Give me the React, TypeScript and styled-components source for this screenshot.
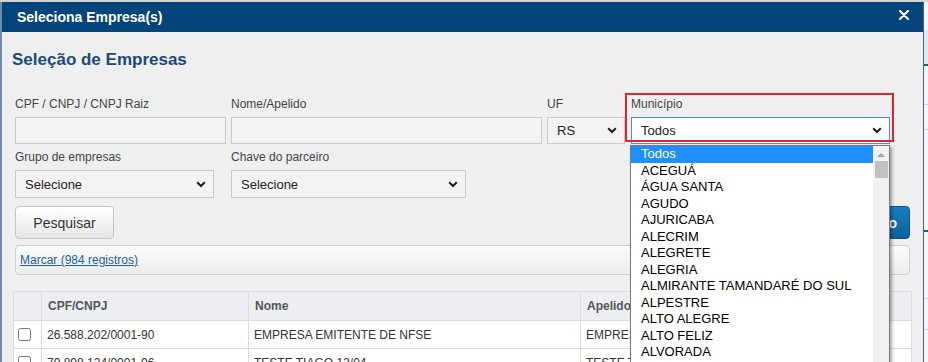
import React from "react";
import styled, { createGlobalStyle, css } from "styled-components";

const Global = createGlobalStyle`
  html, body { margin: 0; padding: 0; overflow: hidden; }
  body {
    background: #f3f4f6;
    font-family: "Liberation Sans", Arial, sans-serif;
    color: #333;
  }
  * { box-sizing: border-box; }
`;

const Page = styled.div`
  display: flex;
  align-items: flex-start;
  border-top: 2px solid #d2d2d2;
  height: 362px;
`;

const Modal = styled.div`
  width: 924px;
  height: 360px;
  display: flex;
  flex-direction: column;
  border-left: 2px solid #6b8cb0;
  border-right: 1px solid #4a6078;
  background: #efefef;
  flex-shrink: 0;
`;

const Header = styled.div`
  height: 30px;
  background: #03457a;
  display: flex;
  align-items: center;
  justify-content: space-between;
  padding: 0 14px 0 15px;
  flex-shrink: 0;
`;

const Title = styled.div`
  color: #fff;
  font-weight: bold;
  font-size: 14px;
`;

const Close = styled.button`
  border: 0;
  background: none;
  padding: 0;
  width: 10px;
  height: 10px;
  display: flex;
  margin-bottom: 4px;
  cursor: pointer;
`;

const Body = styled.div`
  padding: 18px 13px 0 13px;
  flex: 1;
  overflow: hidden;
`;

const Heading = styled.h2`
  margin: 0 0 0 -3px;
  font-size: 17px;
  line-height: 20px;
  font-weight: bold;
  color: #1a4a7a;
`;

const FieldRow = styled.div<{ $top: number }>`
  display: flex;
  gap: 5px;
  margin-top: ${(p) => p.$top}px;
`;

const Field = styled.div<{ $w: number; $ml?: number }>`
  width: ${(p) => p.$w}px;
  margin-left: ${(p) => p.$ml ?? 0}px;
  position: relative;
  display: flex;
  flex-direction: column;
`;

const Label = styled.label`
  font-size: 12px;
  line-height: 14px;
  height: 14px;
  color: #444;
  margin-bottom: 6px;
  white-space: nowrap;
`;

const controlBase = css`
  height: 27px;
  border: 1px solid #c9c9c9;
  background: #f3f3f3;
  font-family: "Liberation Sans", Arial, sans-serif;
  font-size: 13px;
  color: #222;
`;

const TextInput = styled.input`
  ${controlBase};
  width: 100%;
  padding: 0 8px;
  outline: none;
`;

const SelectBox = styled.div<{ $w?: number; $h?: number; $focused?: boolean }>`
  ${controlBase};
  width: ${(p) => (p.$w ? `${p.$w}px` : "100%")};
  height: ${(p) => p.$h ?? 27}px;
  display: flex;
  align-items: center;
  justify-content: space-between;
  padding: 0 7px 0 9px;
  ${(p) =>
    p.$focused &&
    css`
      background: #fff;
      border-color: #4a8fd6;
    `}
`;

const Chevron = () => (
  <svg width="10" height="7" viewBox="0 0 10 7" aria-hidden>
    <path d="M1.2 1.3 L5 5 L8.8 1.3" fill="none" stroke="#1c1c1c" strokeWidth="2" />
  </svg>
);

const Highlight = styled.div`
  position: absolute;
  left: -6px;
  top: -4px;
  right: -4px;
  bottom: 2px;
  border: 2px solid #e2242d;
  pointer-events: none;
`;

const Dropdown = styled.div`
  position: absolute;
  top: calc(100% + 1px);
  left: -1px;
  width: 260px;
  height: 240px;
  background: #fff;
  border: 1px solid #7a7a7a;
  box-shadow: 2px 2px 3px rgba(0, 0, 0, 0.35);
  display: flex;
  z-index: 5;
  overflow: hidden;
`;

const OptionList = styled.div`
  flex: 1;
  display: flex;
  flex-direction: column;
`;

const Option = styled.div<{ $active?: boolean }>`
  height: 16.5px;
  line-height: 16.5px;
  font-size: 13px;
  padding-left: 10px;
  color: ${(p) => (p.$active ? "#fff" : "#000")};
  background: ${(p) => (p.$active ? "#1e90ff" : "transparent")};
  white-space: nowrap;
  flex-shrink: 0;
`;

const Scrollbar = styled.div`
  width: 16px;
  background: #f1f1f1;
  display: flex;
  flex-direction: column;
  align-items: center;
  padding-top: 7px;
  gap: 4px;
`;

const Thumb = styled.div`
  width: 13px;
  height: 17px;
  background: #c1c1c1;
`;

const ActionRow = styled.div`
  display: flex;
  justify-content: space-between;
  margin-top: 8px;
`;

const Button = styled.button<{ $primary?: boolean }>`
  height: 33px;
  padding: 0 17px;
  border-radius: 4px;
  font-family: "Liberation Sans", Arial, sans-serif;
  font-size: 14px;
  ${(p) =>
    p.$primary
      ? css`
          background: linear-gradient(#1a7dc2, #0b619f);
          border: 1px solid #08558a;
          color: #fff;
          font-weight: bold;
          padding: 0 12px;
        `
      : css`
          background: linear-gradient(#ffffff, #e6e6e6);
          border: 1px solid #c3c3c3;
          color: #333;
          width: 99px;
        `}
`;

const MarkBar = styled.div`
  margin-top: 6px;
  height: 30px;
  border: 1px solid #cdcdcd;
  border-radius: 4px;
  background: linear-gradient(#fbfbfb, #ececec);
  display: flex;
  align-items: center;
  padding-left: 4px;
`;

const MarkLink = styled.a`
  color: #1d5f9c;
  text-decoration: underline;
  font-size: 12px;
`;

const Table = styled.table`
  margin: 16px -2px 0;
  width: calc(100% + 4px);
  border-collapse: collapse;
  font-size: 12px;
  background: #fff;
`;

const Th = styled.th<{ $w?: number }>`
  height: 29px;
  background: #eceef1;
  color: #555;
  font-weight: bold;
  text-align: left;
  padding: 0 6px;
  border: 1px solid #dcdcdc;
  ${(p) => p.$w && `width: ${p.$w}px;`}
`;

const Td = styled.td`
  height: 28px;
  padding: 0 5px;
  color: #333;
  border: 1px solid #dcdcdc;
  white-space: nowrap;
`;

const CheckCell = styled.td`
  height: 28px;
  padding: 0 0 0 4px;
  border: 1px solid #dcdcdc;
`;

const Check = styled.input`
  margin: 0;
  width: 13px;
  height: 13px;
  display: block;
`;

const Backdrop = styled.div`
  flex: 1;
  height: 360px;
  display: flex;
  flex-direction: column;
  background: #f4f5f7;
`;

const Seg = styled.div<{ $h: number; $c: string }>`
  height: ${(p) => p.$h}px;
  background: ${(p) => p.$c};
  flex-shrink: 0;
`;

const municipios = [
  "Todos",
  "ACEGUÁ",
  "ÁGUA SANTA",
  "AGUDO",
  "AJURICABA",
  "ALECRIM",
  "ALEGRETE",
  "ALEGRIA",
  "ALMIRANTE TAMANDARÉ DO SUL",
  "ALPESTRE",
  "ALTO ALEGRE",
  "ALTO FELIZ",
  "ALVORADA",
  "AMARAL FERRADOR",
  "AMETISTA DO SUL",
];

const rows = [
  { doc: "26.588.202/0001-90", nome: "EMPRESA EMITENTE DE NFSE", apelido: "EMPRESA EMITENTE" },
  { doc: "79.898.124/0001-96", nome: "TESTE TIAGO 13/04", apelido: "TESTE TIAGO" },
];

export default function App() {
  return (
    <>
      <Global />
      <Page>
        <Modal>
          <Header>
            <Title>Seleciona Empresa(s)</Title>
            <Close aria-label="Fechar">
              <svg width="10" height="10" viewBox="0 0 10 10">
                <path d="M1 1 L9 9 M9 1 L1 9" stroke="#fff" strokeWidth="2.2" strokeLinecap="round" />
              </svg>
            </Close>
          </Header>
          <Body>
            <Heading>Seleção de Empresas</Heading>
            <FieldRow $top={27}>
              <Field $w={211}>
                <Label>CPF / CNPJ / CNPJ Raiz</Label>
                <TextInput />
              </Field>
              <Field $w={311}>
                <Label>Nome/Apelido</Label>
                <TextInput />
              </Field>
              <Field $w={78}>
                <Label>UF</Label>
                <SelectBox>
                  <span>RS</span>
                  <Chevron />
                </SelectBox>
              </Field>
              <Field $w={259} $ml={1}>
                <Label>Município</Label>
                <SelectBox $focused>
                  <span>Todos</span>
                  <Chevron />
                </SelectBox>
                <Highlight />
                <Dropdown>
                  <OptionList>
                    {municipios.map((m, i) => (
                      <Option key={m} $active={i === 0}>
                        {m}
                      </Option>
                    ))}
                  </OptionList>
                  <Scrollbar>
                    <svg width="8" height="4" viewBox="0 0 8 4">
                      <path d="M0 4 L4 0 L8 4 Z" fill="#a3a3a3" />
                    </svg>
                    <Thumb />
                  </Scrollbar>
                </Dropdown>
              </Field>
            </FieldRow>
            <FieldRow $top={6}>
              <Field $w={211}>
                <Label>Grupo de empresas</Label>
                <SelectBox $w={199} $h={28}>
                  <span>Selecione</span>
                  <Chevron />
                </SelectBox>
              </Field>
              <Field $w={311}>
                <Label>Chave do parceiro</Label>
                <SelectBox $w={235} $h={28}>
                  <span>Selecione</span>
                  <Chevron />
                </SelectBox>
              </Field>
            </FieldRow>
            <ActionRow>
              <Button>Pesquisar</Button>
              <Button $primary>Confirmar seleção</Button>
            </ActionRow>
            <MarkBar>
              <MarkLink href="#">Marcar (984 registros)</MarkLink>
            </MarkBar>
            <Table>
              <thead>
                <tr>
                  <Th $w={28} />
                  <Th $w={207}>CPF/CNPJ</Th>
                  <Th $w={332}>Nome</Th>
                  <Th>Apelido</Th>
                </tr>
              </thead>
              <tbody>
                {rows.map((r) => (
                  <tr key={r.doc}>
                    <CheckCell>
                      <Check type="checkbox" />
                    </CheckCell>
                    <Td>{r.doc}</Td>
                    <Td>{r.nome}</Td>
                    <Td>{r.apelido}</Td>
                  </tr>
                ))}
              </tbody>
            </Table>
          </Body>
        </Modal>
        <Backdrop>
          <Seg $h={28} $c="#f4f5f7" />
          <Seg $h={34} $c="#dfe9f4" />
          <Seg $h={2} $c="#1f5c94" />
          <Seg $h={38} $c="#f4f5f7" />
          <Seg $h={1} $c="#cfd4da" />
          <Seg $h={24} $c="#f4f5f7" />
          <Seg $h={1} $c="#cfd4da" />
          <Seg $h={100} $c="#f4f5f7" />
          <Seg $h={2} $c="#1f5c94" />
          <Seg $h={66} $c="#f4f5f7" />
          <Seg $h={1} $c="#cfd4da" />
          <Seg $h={30} $c="#f4f5f7" />
          <Seg $h={1} $c="#cfd4da" />
        </Backdrop>
      </Page>
    </>
  );
}
